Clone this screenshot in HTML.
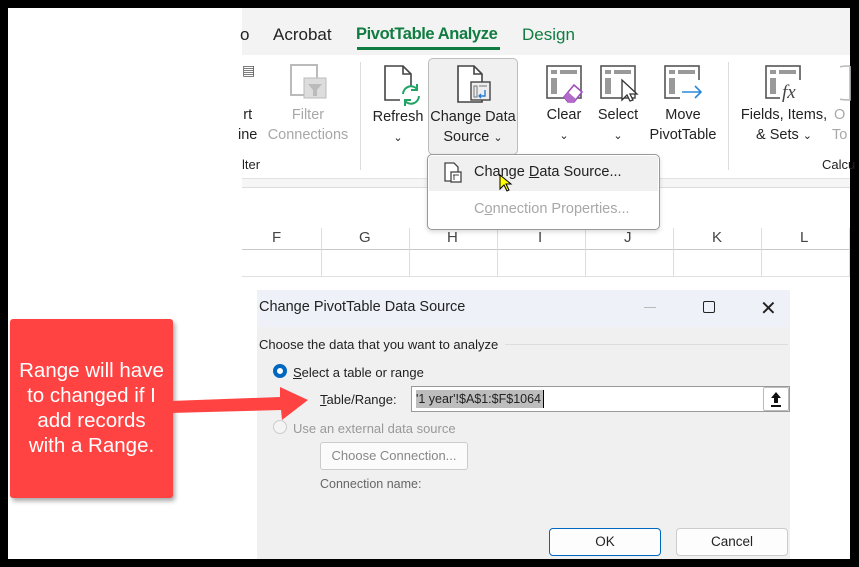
<!DOCTYPE html>
<html><head><meta charset="utf-8"><style>
*{margin:0;padding:0;box-sizing:border-box}
body{width:859px;height:567px;background:#000;position:relative;overflow:hidden;font-family:"Liberation Sans",sans-serif;color:#222}
.a{position:absolute;white-space:nowrap}
.lbl{font-size:14.5px;text-align:center;line-height:20px}
.g{color:#a8a8a8}
</style></head><body>
<div class="a" style="left:8px;top:8px;width:842px;height:551px;background:#fff"></div>
<!-- tab bar -->
<div class="a" style="left:242px;top:8px;width:608px;height:47px;background:#f3f3f3"></div>
<div class="a" style="left:240px;top:25px;font-size:17px">o</div>
<div class="a" style="left:273px;top:25px;font-size:17px">Acrobat</div>
<div class="a" style="left:356px;top:25px;font-size:16.5px;color:#107c41;font-weight:bold;letter-spacing:-0.4px">PivotTable Analyze</div>
<div class="a" style="left:357px;top:47px;width:143px;height:3px;background:#107c41"></div>
<div class="a" style="left:522px;top:25px;font-size:17px;color:#107c41">Design</div>
<!-- ribbon body -->
<div class="a" style="left:242px;top:178px;width:608px;height:10px;background:#f6f6f6;border-top:1px solid #e2e2e2;border-bottom:1px solid #dcdcdc"></div>
<div class="a" style="left:360px;top:62px;width:1px;height:108px;background:#ddd"></div>
<div class="a" style="left:728px;top:62px;width:1px;height:108px;background:#ddd"></div>
<div class="a" style="left:242px;top:62px;font-size:14px;color:#555">&#9636;</div>
<div class="a lbl" style="left:238px;top:105px">rt<br>ine</div>
<div class="a lbl g" style="left:266px;top:105px;width:84px">Filter<br>Connections</div>
<svg class="a" style="left:290px;top:62px" width="40" height="40"><rect x="1" y="3" width="26" height="30" fill="none" stroke="#bbb" stroke-width="2"/><rect x="14" y="16" width="22" height="20" fill="#ddd" stroke="#bbb"/><path d="M18 22h14l-5 6v6h-4v-6z" fill="#bbb"/></svg>
<div class="a" style="left:242px;top:157px;font-size:13px">lter</div>
<div class="a" style="left:822px;top:157px;font-size:13px">Calcu</div>
<!-- refresh -->
<svg class="a" style="left:383px;top:64px" width="40" height="42"><path d="M2 2h18l8 8v26H2z" fill="#fff" stroke="#444" stroke-width="1.6"/><path d="M20 2v8h8" fill="none" stroke="#444" stroke-width="1.6"/><rect x="17" y="22" width="22" height="18" fill="#fff"/><path d="M20 30a8 8 0 0 1 14-5M36 32a8 8 0 0 1-14 5" fill="none" stroke="#21a366" stroke-width="2"/><path d="M34 20v6h-6M22 42v-6h6" fill="none" stroke="#21a366" stroke-width="2"/></svg>
<div class="a lbl" style="left:370px;top:107px;width:56px">Refresh<br><span style="font-size:11px">&#8964;</span></div>
<!-- change data source button -->
<div class="a" style="left:428px;top:58px;width:90px;height:97px;background:#f0f0f0;border:1px solid #bcbcbc;border-radius:5px"></div>
<svg class="a" style="left:456px;top:64px" width="40" height="42"><path d="M2 2h16l8 8v28H2z" fill="#fff" stroke="#444" stroke-width="1.6"/><path d="M18 2v8h8" fill="none" stroke="#444" stroke-width="1.6"/><rect x="15" y="18" width="19" height="18" fill="#eee" stroke="#444" stroke-width="1.4"/><path d="M18 22h3v11h-3zM23 22h8" stroke="#777" fill="none"/><path d="M29 26v6h-6M25 30l-2 2 2 2" stroke="#2b7cd3" fill="none" stroke-width="1.4"/></svg>
<div class="a lbl" style="left:428px;top:107px;width:90px">Change Data<br>Source <span style="font-size:11px">&#8964;</span></div>
<!-- clear select move -->
<svg class="a" style="left:546px;top:64px" width="40" height="40"><rect x="1" y="2" width="34" height="32" fill="#fff" stroke="#555" stroke-width="1.6"/><rect x="5" y="6" width="6" height="4" fill="#999"/><rect x="14" y="6" width="17" height="4" fill="#999"/><rect x="5" y="14" width="6" height="16" fill="#999"/><path d="M18 33l10-12 8 7-8 10h-6z" fill="#fff" stroke="#a04dbd" stroke-width="1.6"/><path d="M18 33l4-5 8 7-2 3h-6z" fill="#b26bc9"/></svg>
<div class="a lbl" style="left:540px;top:105px;width:48px">Clear<br><span style="font-size:11px">&#8964;</span></div>
<svg class="a" style="left:600px;top:64px" width="40" height="40"><rect x="1" y="2" width="34" height="32" fill="#fff" stroke="#555" stroke-width="1.6"/><rect x="5" y="6" width="6" height="4" fill="#999"/><rect x="14" y="6" width="17" height="4" fill="#999"/><rect x="5" y="14" width="6" height="16" fill="#999"/><path d="M22 16v20l5-5 3 6 3-1-3-6h7z" fill="#fff" stroke="#333" stroke-width="1.3"/></svg>
<div class="a lbl" style="left:592px;top:105px;width:52px">Select<br><span style="font-size:11px">&#8964;</span></div>
<svg class="a" style="left:664px;top:64px" width="40" height="40"><rect x="1" y="2" width="34" height="32" fill="#fff" stroke="#555" stroke-width="1.6"/><rect x="5" y="6" width="6" height="4" fill="#999"/><rect x="14" y="6" width="17" height="4" fill="#999"/><rect x="5" y="14" width="6" height="16" fill="#999"/><rect x="16" y="16" width="24" height="22" fill="#fff"/><path d="M18 28h19M31 22l6 6-6 6" stroke="#2b88d8" fill="none" stroke-width="1.6"/></svg>
<div class="a lbl" style="left:645px;top:105px;width:76px">Move<br>PivotTable</div>
<svg class="a" style="left:765px;top:64px" width="40" height="40"><rect x="1" y="2" width="34" height="32" fill="#fff" stroke="#555" stroke-width="1.6"/><rect x="5" y="6" width="6" height="4" fill="#999"/><rect x="14" y="6" width="17" height="4" fill="#999"/><rect x="5" y="14" width="6" height="16" fill="#999"/><rect x="15" y="16" width="24" height="22" fill="#fff"/><text x="17" y="34" font-family="Liberation Serif" font-style="italic" font-size="19" fill="#444">fx</text></svg>
<div class="a lbl" style="left:740px;top:105px;width:88px">Fields, Items,<br>&amp; Sets <span style="font-size:11px">&#8964;</span></div>
<div class="a lbl g" style="left:832px;top:105px">O<br>To</div>
<svg class="a" style="left:840px;top:64px" width="12" height="40"><path d="M10 2a8 4 0 0 0 0 34V2" fill="none" stroke="#bbb" stroke-width="1.6"/></svg>
<!-- grid -->
<div class="a" style="left:242px;top:228px;width:608px;height:22px;border-bottom:1px solid #c8c8c8"></div>
<div class="a" style="left:242px;top:276px;width:608px;height:1px;background:#e0e0e0"></div>
<div class="a" style="left:242px;top:229px;width:608px;font-size:15px;color:#444">
<span class="a" style="left:30px">F</span><span class="a" style="left:117px">G</span><span class="a" style="left:205px">H</span><span class="a" style="left:296px">I</span><span class="a" style="left:382px">J</span><span class="a" style="left:470px">K</span><span class="a" style="left:558px">L</span></div>
<div class="a" style="left:321px;top:228px;width:1px;height:49px;background:#ddd"></div>
<div class="a" style="left:409px;top:228px;width:1px;height:49px;background:#ddd"></div>
<div class="a" style="left:497px;top:228px;width:1px;height:49px;background:#ddd"></div>
<div class="a" style="left:585px;top:228px;width:1px;height:49px;background:#ddd"></div>
<div class="a" style="left:673px;top:228px;width:1px;height:49px;background:#ddd"></div>
<div class="a" style="left:761px;top:228px;width:1px;height:49px;background:#ddd"></div>
<div class="a" style="left:849px;top:228px;width:1px;height:49px;background:#ddd"></div>
<!-- dropdown -->
<div class="a" style="left:427px;top:154px;width:233px;height:76px;background:#fff;border:1px solid #999;border-radius:5px;box-shadow:0 2px 5px rgba(0,0,0,.15)"></div>
<div class="a" style="left:429px;top:156px;width:229px;height:35px;background:#f0f0f0"></div>
<svg class="a" style="left:444px;top:162px" width="20" height="22"><path d="M1 1h9l4 4v14H1z" fill="#fff" stroke="#444" stroke-width="1.3"/><rect x="7" y="10" width="10" height="10" fill="#fff" stroke="#444" stroke-width="1.3"/><path d="M9 13h6M10 13v5" stroke="#444"/></svg>
<div class="a" style="left:474px;top:164px;font-size:14.5px">Change <u>D</u>ata Source...</div>
<svg class="a" style="left:499px;top:174px" width="14" height="18"><path d="M1 1v14l4-4 3 6 2-1-3-6h5z" fill="#ff0" stroke="#000"/></svg>
<div class="a g" style="left:474px;top:201px;font-size:14.5px">C<u>o</u>nnection Properties...</div>
<!-- dialog -->
<div class="a" style="left:257px;top:290px;width:533px;height:269px;background:#f0f0f0"></div>
<div class="a" style="left:257px;top:290px;width:533px;height:37px;background:#eef2f8"></div>
<div class="a" style="left:259px;top:299px;font-size:14.5px">Change PivotTable Data Source</div>
<div class="a" style="left:644px;top:307px;width:12px;height:1px;background:#bbb"></div>
<div class="a" style="left:703px;top:301px;width:12px;height:12px;border:1.5px solid #222;border-radius:2px"></div>
<div class="a" style="left:760px;top:296px;font-size:20px;font-weight:300">&#10005;</div>
<div class="a" style="left:259px;top:337px;font-size:13px">Choose the data that you want to analyze</div>
<div class="a" style="left:505px;top:344px;width:283px;height:1px;background:#ddd"></div>
<div class="a" style="left:273px;top:364px;width:14px;height:14px;border-radius:50%;border:4px solid #0067c0;background:#fff"></div>
<div class="a" style="left:293px;top:365px;font-size:13px"><u>S</u>elect a table or range</div>
<div class="a" style="left:320px;top:392px;font-size:13px"><u>T</u>able/Range:</div>
<div class="a" style="left:411px;top:386px;width:379px;height:26px;background:#fff;border:1px solid #999"></div>
<div class="a" style="left:416px;top:390px;width:127px;height:18px;background:#bdbdbd;font-size:12.5px;line-height:18px;overflow:hidden">'1 year'!$A$1:$F$1064</div>
<div class="a" style="left:543px;top:390px;width:1px;height:18px;background:#000"></div>
<div class="a" style="left:763px;top:387px;width:26px;height:24px;background:#fff;border:1px solid #bbb;border-radius:2px"></div>
<svg class="a" style="left:768px;top:390px" width="16" height="18"><path d="M8 2l-5 6h3v5h4V8h3z" fill="#111"/><rect x="3" y="15" width="10" height="2" fill="#111"/></svg>
<div class="a" style="left:273px;top:420px;width:14px;height:14px;border-radius:50%;border:1px solid #ccc;background:#f4f4f4"></div>
<div class="a g" style="left:293px;top:421px;font-size:13px;color:#999">Use an external data source</div>
<div class="a" style="left:320px;top:442px;width:148px;height:28px;background:#fbfbfb;border:1px solid #ccc;border-radius:3px;font-size:13px;color:#888;text-align:center;line-height:26px">Choose Connection...</div>
<div class="a" style="left:320px;top:477px;font-size:12.5px;color:#666">Connection name:</div>
<div class="a" style="left:549px;top:528px;width:112px;height:28px;background:#fdfdfd;border:1.5px solid #0067c0;border-radius:4px;font-size:13.5px;text-align:center;line-height:25px">OK</div>
<div class="a" style="left:676px;top:528px;width:112px;height:28px;background:#fdfdfd;border:1px solid #ccc;border-radius:4px;font-size:13.5px;text-align:center;line-height:26px">Cancel</div>
<!-- callout -->
<div class="a" style="left:10px;top:319px;width:163px;height:179px;background:#ff4343;border-radius:3px;box-shadow:2px 3px 5px rgba(0,0,0,.35)"></div>
<div class="a" style="left:10px;top:358px;width:163px;color:#fff;font-size:20.5px;line-height:25px;text-align:center">Range will have<br>to changed if I<br>add records<br>with a Range.</div>
<svg class="a" style="left:165px;top:380px" width="150" height="42"><path d="M5 21l110-4 0-10 28 13-26 20-1-10-111 3z" fill="#ff4343"/></svg>
</body></html>
